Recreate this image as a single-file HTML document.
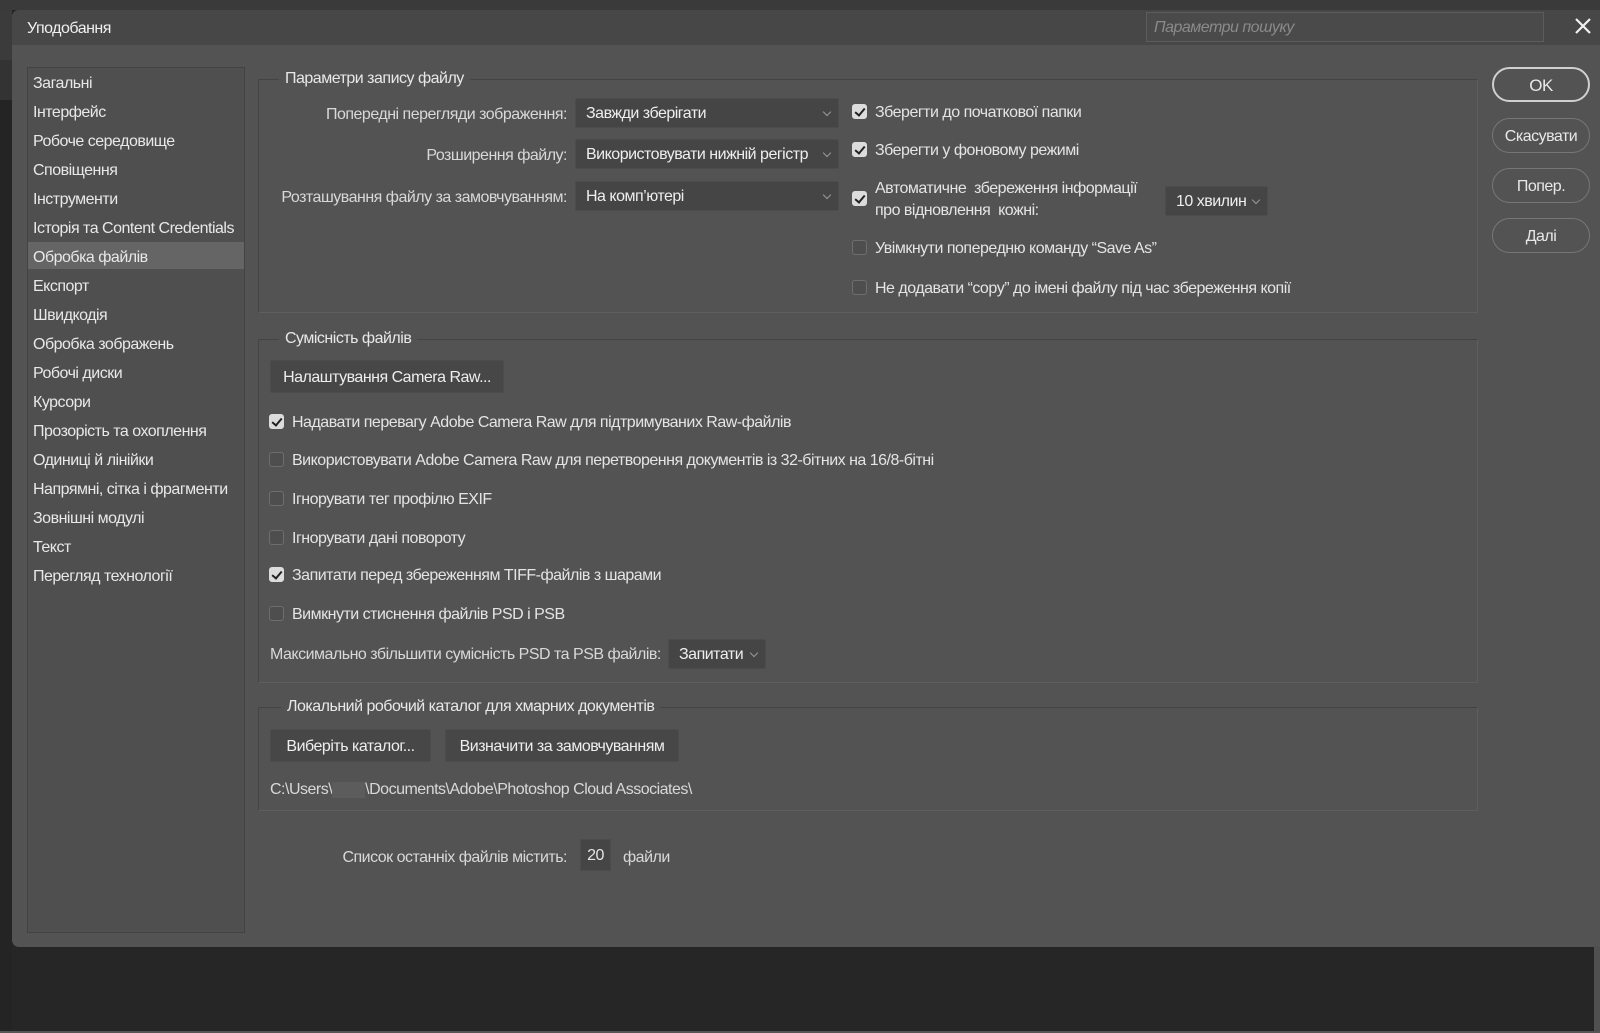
<!DOCTYPE html>
<html><head><meta charset="utf-8"><style>
*{box-sizing:border-box;margin:0;padding:0}
body{width:1600px;height:1033px;background:#262626;position:relative;overflow:hidden;font-family:"Liberation Sans",sans-serif;color:#e4e4e4;font-size:16px;letter-spacing:-0.5px}
.a{position:absolute;white-space:nowrap}
.t{margin-top:2px}
.dlg{position:absolute;left:12px;top:10px;width:1600px;height:937px;background:#535353;border-radius:7px 0 0 7px}
.tb{position:absolute;left:12px;top:10px;width:1600px;height:35px;background:#474747;border-radius:7px 0 0 0}
.side{position:absolute;left:27px;top:67px;width:218px;height:866px;background:#4f4f4f;border:1px solid #434343}
.si{position:absolute;left:33px;height:27px;line-height:27px;font-size:16px;color:#e8e8e8;margin-top:2px}
.sel{position:absolute;left:28px;top:242px;width:216px;height:27px;background:#656565}
.grp{position:absolute;border:1px solid #444;border-right-color:#5e5e5e;border-bottom-color:#5e5e5e}
.lg{position:absolute;background:#535353;padding:0 6px;color:#e8e8e8;margin-top:2px}
.dd{position:absolute;height:30px;background:#454545;border:1px solid #4c4c4c;line-height:30px;padding-left:10px;color:#eee;border-radius:2px}
.dd:after{content:"";position:absolute;right:8px;top:10px;width:5px;height:5px;border-right:1px solid #999;border-bottom:1px solid #999;transform:rotate(45deg)}
.cb{position:absolute;width:15px;height:15px;border-radius:3px;background:#4e4e4e;border:1px solid #6e6e6e}
.cb.on{background:#dcdcdc;border-color:#dcdcdc}
.cb.on:after{content:"";position:absolute;left:4px;top:1px;width:4px;height:8px;border-right:2px solid #222;border-bottom:2px solid #222;transform:rotate(40deg)}
.btn{position:absolute;height:33px;background:#474747;border:1px solid #4c4c4c;line-height:33px;text-align:center;color:#eee;border-radius:2px}
.rb{position:absolute;left:1492px;width:98px;height:35px;border:1px solid #777;border-radius:18px;text-align:center;line-height:35px;color:#e8e8e8}
.lbl{position:absolute;text-align:right;color:#d8d8d8;margin-top:2px}
</style></head><body>
<div class="a" style="left:0;top:0;width:1600px;height:10px;background:#3a3a3a"></div>
<div class="a" style="left:0;top:10px;width:12px;height:50px;background:#3b3b3b"></div>
<div class="a" style="left:0;top:60px;width:12px;height:40px;background:#333"></div>
<div class="a" style="left:0;top:100px;width:12px;height:933px;background:#242424"></div>
<div class="a" style="left:1594px;top:947px;width:6px;height:86px;background:#505050"></div>
<div class="a" style="left:0;top:1031px;width:1600px;height:2px;background:#555"></div>
<div class="dlg"></div>
<div class="tb"></div>
<div class="a t" style="left:27px;top:18px;font-size:16px;color:#f0f0f0">Уподобання</div>
<div class="a" style="left:1146px;top:12px;width:398px;height:30px;background:#4a4a4a;border:1px solid #5c5c5c"></div>
<div class="a t" style="left:1154px;top:17px;font-style:italic;color:#8a8a8a">Параметри пошуку</div>
<svg class="a" style="left:1574px;top:17px" width="18" height="18"><path d="M2 2L16 16M16 2L2 16" stroke="#f0f0f0" stroke-width="2.2"/></svg>

<div class="side"></div>
<div class="sel"></div>
<div class="si" style="top:68px">Загальні</div>
<div class="si" style="top:97px">Інтерфейс</div>
<div class="si" style="top:126px">Робоче середовище</div>
<div class="si" style="top:155px">Сповіщення</div>
<div class="si" style="top:184px">Інструменти</div>
<div class="si" style="top:213px">Історія та Content Credentials</div>
<div class="si" style="top:242px">Обробка файлів</div>
<div class="si" style="top:271px">Експорт</div>
<div class="si" style="top:300px">Швидкодія</div>
<div class="si" style="top:329px">Обробка зображень</div>
<div class="si" style="top:358px">Робочі диски</div>
<div class="si" style="top:387px">Курсори</div>
<div class="si" style="top:416px">Прозорість та охоплення</div>
<div class="si" style="top:445px">Одиниці й лінійки</div>
<div class="si" style="top:474px">Напрямні, сітка і фрагменти</div>
<div class="si" style="top:503px">Зовнішні модулі</div>
<div class="si" style="top:532px">Текст</div>
<div class="si" style="top:561px">Перегляд технології</div>

<div class="rb" style="top:67px;border:2px solid #d0d0d0;line-height:33px;font-size:17px">OK</div>
<div class="rb" style="top:118px">Скасувати</div>
<div class="rb" style="top:168px">Попер.</div>
<div class="rb" style="top:218px">Далі</div>

<div class="grp" style="left:258px;top:79px;width:1220px;height:234px"></div>
<div class="lg" style="left:279px;top:68px">Параметри запису файлу</div>
<div class="lbl" style="left:260px;width:307px;top:104px">Попередні перегляди зображення:</div>
<div class="lbl" style="left:260px;width:307px;top:145px">Розширення файлу:</div>
<div class="lbl" style="left:260px;width:307px;top:187px">Розташування файлу за замовчуванням:</div>
<div class="dd" style="left:575px;top:98px;width:264px">Завжди зберігати</div>
<div class="dd" style="left:575px;top:139px;width:264px">Використовувати нижній регістр</div>
<div class="dd" style="left:575px;top:181px;width:264px">На комп’ютері</div>
<div class="cb on" style="left:852px;top:104px"></div><div class="a t" style="left:875px;top:102px">Зберегти до початкової папки</div>
<div class="cb on" style="left:852px;top:142px"></div><div class="a t" style="left:875px;top:140px">Зберегти у фоновому режимі</div>
<div class="cb on" style="left:852px;top:191px"></div><div class="a t" style="left:875px;top:178px">Автоматичне&nbsp; збереження інформації</div><div class="a t" style="left:875px;top:200px">про відновлення&nbsp; кожні:</div>
<div class="dd" style="left:1165px;top:186px;width:103px">10 хвилин</div>
<div class="cb" style="left:852px;top:240px"></div><div class="a t" style="left:875px;top:238px">Увімкнути попередню команду “Save As”</div>
<div class="cb" style="left:852px;top:280px"></div><div class="a t" style="left:875px;top:278px">Не додавати “copy” до імені файлу під час збереження копії</div>

<div class="grp" style="left:258px;top:339px;width:1220px;height:344px"></div>
<div class="lg" style="left:279px;top:328px">Сумісність файлів</div>
<div class="btn" style="left:270px;top:360px;width:234px">Налаштування Camera Raw...</div>
<div class="cb on" style="left:269px;top:414px"></div><div class="a t" style="left:292px;top:412px">Надавати перевагу Adobe Camera Raw для підтримуваних Raw-файлів</div>
<div class="cb" style="left:269px;top:452px"></div><div class="a t" style="left:292px;top:450px">Використовувати Adobe Camera Raw для перетворення документів із 32-бітних на 16/8-бітні</div>
<div class="cb" style="left:269px;top:491px"></div><div class="a t" style="left:292px;top:489px">Ігнорувати тег профілю EXIF</div>
<div class="cb" style="left:269px;top:530px"></div><div class="a t" style="left:292px;top:528px">Ігнорувати дані повороту</div>
<div class="cb on" style="left:269px;top:567px"></div><div class="a t" style="left:292px;top:565px">Запитати перед збереженням TIFF-файлів з шарами</div>
<div class="cb" style="left:269px;top:606px"></div><div class="a t" style="left:292px;top:604px">Вимкнути стиснення файлів PSD і PSB</div>
<div class="a t" style="left:270px;top:644px;color:#d8d8d8">Максимально збільшити сумісність PSD та PSB файлів:</div>
<div class="dd" style="left:668px;top:639px;width:98px">Запитати</div>

<div class="grp" style="left:258px;top:707px;width:1220px;height:104px"></div>
<div class="lg" style="left:281px;top:696px">Локальний робочий каталог для хмарних документів</div>
<div class="btn" style="left:270px;top:729px;width:161px">Виберіть каталог...</div>
<div class="btn" style="left:445px;top:729px;width:234px">Визначити за замовчуванням</div>
<div class="a t" style="left:270px;top:779px;color:#d8d8d8">C:\Users\<span style="display:inline-block;width:33px;height:16px;background:#5c5c5c;vertical-align:middle"></span>\Documents\Adobe\Photoshop Cloud Associates\</div>

<div class="lbl" style="left:260px;width:307px;top:847px">Список останніх файлів містить:</div>
<div class="a" style="left:580px;top:839px;width:31px;height:32px;background:#454545;border:1px solid #4c4c4c;text-align:center;line-height:32px">20</div>
<div class="a t" style="left:623px;top:847px;color:#d8d8d8">файли</div>
</body></html>
